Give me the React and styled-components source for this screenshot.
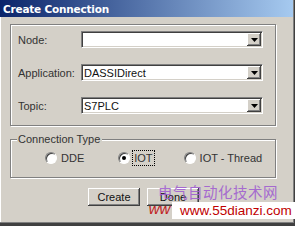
import React from 'react';
import styled, { createGlobalStyle } from 'styled-components';

const GlobalStyle = createGlobalStyle`
  html, body {
    margin: 0;
    padding: 0;
    background: #d4d0c8;
  }
  body {
    font-family: Tahoma, "Liberation Sans", Arial, sans-serif;
    font-size: 11px;
    color: #000;
  }
`;

const fields = [
  { label: 'Node:', value: '' },
  { label: 'Application:', value: 'DASSIDirect' },
  { label: 'Topic:', value: 'S7PLC' }
];

const radios = [
  { label: 'DDE', checked: false, gap: 0 },
  { label: 'IOT', checked: true, gap: 33 },
  { label: 'IOT - Thread', checked: false, gap: 30 }
];

const DropArrow = () => (
  <svg width="7" height="4" viewBox="0 0 7 4">
    <path d="M0 0h7L3.5 4z" fill="#000" />
  </svg>
);

const App = () => (
  <Screen>
    <GlobalStyle />
    <Window>
      <TitleBar>Create Connection</TitleBar>
      <Body>
        <FieldGroup>
          {fields.map(f => (
            <Row key={f.label}>
              <Label>{f.label}</Label>
              <Combo>
                <ComboText>{f.value}</ComboText>
                <DropButton>
                  <DropArrow />
                </DropButton>
              </Combo>
            </Row>
          ))}
        </FieldGroup>

        <TypeGroup>
          <Legend>Connection Type</Legend>
          <RadioRow>
            {radios.map(r => (
              <RadioItem key={r.label} gap={r.gap}>
                <RadioCircle>{r.checked && <RadioDot />}</RadioCircle>
                <RadioLabel focused={r.checked}>{r.label}</RadioLabel>
              </RadioItem>
            ))}
          </RadioRow>
        </TypeGroup>

        <ButtonRow>
          <Button>Create</Button>
          <Button>Done</Button>
        </ButtonRow>
      </Body>

      <WatermarkCn>电气自动化技术网</WatermarkCn>
      <WatermarkRed>ww</WatermarkRed>
      <WatermarkUrl>www.55dianzi.com</WatermarkUrl>
    </Window>
  </Screen>
);

export default App;

const Screen = styled.div`
  width: 295px;
  height: 226px;
  overflow: hidden;
  background: #d4d0c8;
`;

const Window = styled.div`
  position: relative;
  width: 295px;
  height: 226px;
  box-sizing: border-box;
  display: flex;
  flex-direction: column;
  background: #d4d0c8;
  border-right: 1px solid #404040;
  border-bottom: 3px solid #404040;
  box-shadow: inset -1px -1px 0 #808080, inset 1px 0 0 #fff;
`;

const TitleBar = styled.div`
  height: 17px;
  flex-shrink: 0;
  margin-right: 1px;
  padding-left: 3px;
  display: flex;
  align-items: center;
  background: linear-gradient(to right, #0a246a, #a6caf0);
  color: #fff;
  font-family: "DejaVu Sans", "Liberation Sans", sans-serif;
  font-weight: bold;
  font-size: 10.5px;
  letter-spacing: -0.2px;
`;

const Body = styled.div`
  display: flex;
  flex-direction: column;
  padding: 7px 0 0 10px;
`;

const etched = `
  border: 1px solid #808080;
  box-shadow: 1px 1px 0 #fff, inset 1px 1px 0 #fff;
`;

const FieldGroup = styled.div`
  ${etched}
  width: 264px;
  height: 94px;
  box-sizing: content-box;
  padding-top: 6px;
  display: flex;
  flex-direction: column;
  gap: 16px;
`;

const Row = styled.div`
  display: flex;
  align-items: center;
  height: 17px;
`;

const Label = styled.div`
  width: 63px;
  padding-left: 7px;
  font-family: "Liberation Sans", Arial, sans-serif;
  font-size: 11px;
  color: #333;
`;

const Combo = styled.div`
  width: 182px;
  height: 17px;
  box-sizing: border-box;
  display: flex;
  align-items: center;
  background: #fff;
  border-top: 1px solid #808080;
  border-left: 1px solid #808080;
  border-right: 1px solid #fff;
  border-bottom: 1px solid #fff;
  box-shadow: inset 1px 1px 0 #404040, inset -1px -1px 0 #d4d0c8;
`;

const ComboText = styled.div`
  flex: 1;
  padding-left: 2px;
  font-family: "Liberation Sans", Arial, sans-serif;
  font-size: 11px;
  color: #111;
`;

const DropButton = styled.div`
  width: 14px;
  height: 13px;
  margin-right: 1px;
  display: flex;
  align-items: center;
  justify-content: center;
  background: #d4d0c8;
  box-shadow: inset -1px -1px 0 #404040, inset 1px 1px 0 #fff,
    inset -2px -2px 0 #808080;
`;

const TypeGroup = styled.div`
  ${etched}
  position: relative;
  margin-top: 13px;
  width: 264px;
  height: 37px;
  box-sizing: content-box;
`;

const Legend = styled.div`
  position: absolute;
  left: 6px;
  top: -7px;
  padding: 0 2px 0 1px;
  background: #d4d0c8;
  font-family: "Liberation Sans", Arial, sans-serif;
  font-size: 11px;
  color: #333;
  line-height: 13px;
  white-space: nowrap;
`;

const RadioRow = styled.div`
  display: flex;
  align-items: center;
  padding: 11px 0 0 34px;
`;

const RadioItem = styled.div`
  display: flex;
  align-items: center;
  flex-shrink: 0;
  margin-left: ${p => p.gap}px;
`;

const RadioCircle = styled.div`
  width: 12px;
  height: 12px;
  flex-shrink: 0;
  box-sizing: border-box;
  border-radius: 50%;
  background: #fff;
  border: 1px solid;
  border-color: #808080 #fff #fff #808080;
  box-shadow: inset 1px 1px 0 #404040;
  display: flex;
  align-items: center;
  justify-content: center;
`;

const RadioDot = styled.div`
  width: 4px;
  height: 4px;
  border-radius: 50%;
  background: #000;
`;

const RadioLabel = styled.span`
  margin-left: 3px;
  padding: 1px 1px;
  white-space: nowrap;
  font-family: "Liberation Sans", Arial, sans-serif;
  font-size: 11px;
  color: #333;
  outline: ${p => (p.focused ? '1px dotted #000' : 'none')};
`;

const ButtonRow = styled.div`
  display: flex;
  gap: 7px;
  margin: 10px 0 0 78px;
`;

const Button = styled.div`
  width: 52px;
  height: 18px;
  display: flex;
  align-items: center;
  justify-content: center;
  background: #d4d0c8;
  font-family: "Liberation Sans", Arial, sans-serif;
  font-size: 11px;
  color: #111;
  box-shadow: inset -1px -1px 0 #404040, inset 1px 1px 0 #fff,
    inset -2px -2px 0 #808080;
`;

const WatermarkCn = styled.div`
  position: absolute;
  left: 158px;
  top: 183px;
  font-family: "Noto Sans CJK SC", sans-serif;
  font-size: 14.5px;
  line-height: 18px;
  letter-spacing: 0.5px;
  color: #a060d0;
  opacity: 0.9;
  white-space: nowrap;
`;

const WatermarkRed = styled.div`
  position: absolute;
  left: 149px;
  top: 200px;
  font-family: "Liberation Sans", Arial, sans-serif;
  font-size: 15px;
  color: #c02020;
  transform: skewX(-10deg);
`;

const WatermarkUrl = styled.div`
  position: absolute;
  left: 172px;
  top: 202px;
  width: 123px;
  height: 17px;
  padding-left: 8px;
  box-sizing: border-box;
  background: #fff;
  font-family: "Liberation Sans", Arial, sans-serif;
  font-size: 13.5px;
  line-height: 17px;
  color: #c00000;
  white-space: nowrap;
`;
